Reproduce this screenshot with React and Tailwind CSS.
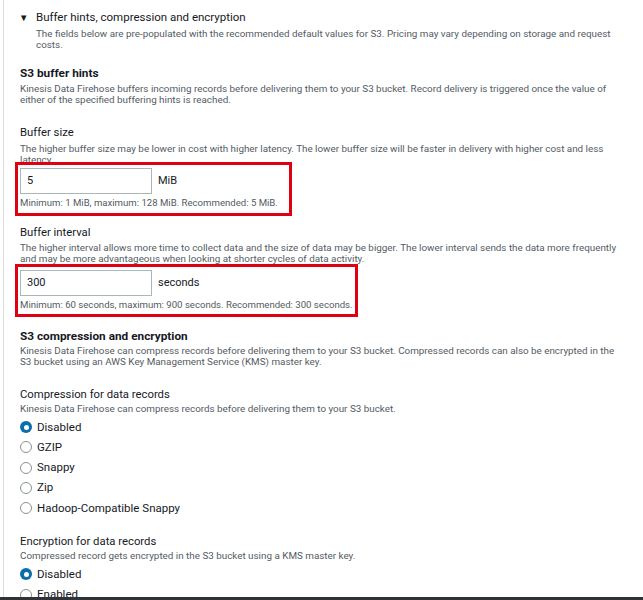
import React from 'react';

const Desc = ({ className = '', children }) => (
  <p className={`text-[9.85px] leading-[11px] text-[#545b64] ${className}`}>{children}</p>
);

const Label = ({ className = '', children }) => (
  <div className={`h-[14px] leading-[14px] text-[11.3px] text-[#16191f] ${className}`}>{children}</div>
);

const Heading = ({ className = '', children }) => (
  <h3 className={`h-[14px] leading-[14px] text-[11.8px] font-bold text-[#16191f] ${className}`}>{children}</h3>
);

const Radio = ({ checked, label }) => (
  <label className="flex items-center h-[20.25px] gap-[5px] text-[11.5px] text-[#16191f]">
    {checked ? (
      <span className="w-3 h-3 rounded-full bg-[#0a6ea8] flex items-center justify-center">
        <span className="w-[5px] h-[5px] rounded-full bg-white" />
      </span>
    ) : (
      <span className="w-3 h-3 rounded-full border border-[#8a9293] bg-white" />
    )}
    {label}
  </label>
);

const NumberField = ({ value, unit, hint, boxWidth, boxHeight }) => (
  <div className="relative">
    <div className="flex items-center gap-[6px]">
      <div className="w-[132px] h-[26px] border border-[#aab7b8] flex items-center pl-[6px] text-[11px] text-[#16191f]">
        {value}
      </div>
      <span className="text-[11px] text-[#16191f]">{unit}</span>
    </div>
    <p className="mt-[3px] text-[9.6px] leading-[11px] text-[#545b64]">{hint}</p>
    {/* annotation box drawn over the field */}
    <div
      className={`absolute left-[-5px] top-[-6px] border-[3px] border-[#df0011] ${boxWidth} ${boxHeight}`}
    />
  </div>
);

export default function App() {
  return (
    <div className="w-[643px] h-[600px] flex flex-col bg-white font-['Roboto',sans-serif] overflow-hidden">
      <div className="flex-1 flex overflow-hidden">
        <div className="w-[3px]" />
        <div className="w-px bg-[#dcdcdc]" />
        <div className="flex-1 pl-4 pr-5">
          {/* Expandable header */}
          <div className="pt-[10px] pl-[16px]">
            <div className="relative flex items-center h-4 text-[11.5px] text-[#16191f]">
              <span className="absolute left-[-17px] text-[9.5px]">▼</span>
              Buffer hints, compression and encryption
            </div>
            <Desc className="mt-[2px]">
              The fields below are pre-populated with the recommended default values for S3. Pricing may vary depending on storage and request costs.
            </Desc>
          </div>

          {/* S3 buffer hints */}
          <Heading className="mt-[16px]">S3 buffer hints</Heading>
          <Desc className="mt-[3px]">
            Kinesis Data Firehose buffers incoming records before delivering them to your S3 bucket. Record delivery is triggered once the value of either of the specified buffering hints is reached.
          </Desc>

          <Label className="mt-[21px]">Buffer size</Label>
          <Desc className="mt-[3px]">
            The higher buffer size may be lower in cost with higher latency. The lower buffer size will be faster in delivery with higher cost and less latency.
          </Desc>
          <div className="mt-[3px]">
            <NumberField
              value="5"
              unit="MiB"
              hint="Minimum: 1 MiB, maximum: 128 MiB. Recommended: 5 MiB."
              boxWidth="w-[277px]"
              boxHeight="h-[54px]"
            />
          </div>

          <Label className="mt-[18px]">Buffer interval</Label>
          <Desc className="mt-[2px]">
            The higher interval allows more time to collect data and the size of data may be bigger. The lower interval sends the data more frequently and may be more advantageous when looking at shorter cycles of data activity.
          </Desc>
          <div className="mt-[6px]">
            <NumberField
              value="300"
              unit="seconds"
              hint="Minimum: 60 seconds, maximum: 900 seconds. Recommended: 300 seconds."
              boxWidth="w-[343px]"
              boxHeight="h-[53px]"
            />
          </div>

          {/* S3 compression and encryption */}
          <Heading className="mt-[19px]">S3 compression and encryption</Heading>
          <Desc className="mt-[2px]">
            Kinesis Data Firehose can compress records before delivering them to your S3 bucket. Compressed records can also be encrypted in the S3 bucket using an AWS Key Management Service (KMS) master key.
          </Desc>

          <Label className="mt-[21px]">Compression for data records</Label>
          <Desc className="mt-[1px]">
            Kinesis Data Firehose can compress records before delivering them to your S3 bucket.
          </Desc>
          <div className="mt-[3px] flex flex-col">
            <Radio checked label="Disabled" />
            <Radio label="GZIP" />
            <Radio label="Snappy" />
            <Radio label="Zip" />
            <Radio label="Hadoop-Compatible Snappy" />
          </div>

          <Label className="mt-[17px]">Encryption for data records</Label>
          <Desc className="mt-[1px]">
            Compressed record gets encrypted in the S3 bucket using a KMS master key.
          </Desc>
          <div className="mt-[3px] flex flex-col">
            <Radio checked label="Disabled" />
            <Radio label="Enabled" />
          </div>
        </div>
      </div>
      <div className="h-[3px] bg-[#2f3237]" />
    </div>
  );
}
